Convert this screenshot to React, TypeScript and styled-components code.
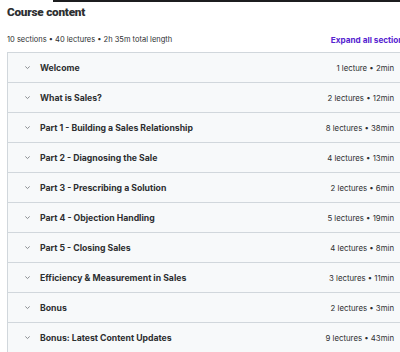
import React from "react";
import styled, { createGlobalStyle } from "styled-components";

const GlobalStyle = createGlobalStyle`
  html, body {
    margin: 0;
    padding: 0;
    background: #ffffff;
    overflow: hidden;
  }
  body {
    font-family: Inter, "Liberation Sans", sans-serif;
    color: #2d2f31;
  }
`;

const Page = styled.div`
  width: 400px;
  height: 352px;
  position: relative;
  overflow: hidden;
`;

const TopBar = styled.div`
  margin-left: 53px;
  height: 2px;
  background: #1c1d1f;
`;

const Content = styled.div`
  padding-left: 7px;
  width: 396px;
`;

const Title = styled.h2`
  margin: 1px 0 0;
  font-family: Roboto, "Liberation Sans", sans-serif;
  font-size: 11.8px;
  font-weight: 900;
  letter-spacing: -0.25px;
  line-height: 18px;
  color: #2d2f31;
`;

const SummaryRow = styled.div`
  display: flex;
  justify-content: space-between;
  align-items: center;
  margin-top: 11px;
  height: 15px;
  white-space: nowrap;
`;

const Summary = styled.span`
  font-size: 7.5px;
  color: #2d2f31;
`;

const ExpandLink = styled.span`
  font-size: 8.2px;
  font-weight: 700;
  color: #5624d0;
  margin-right: -5px;
`;

const Sections = styled.div`
  margin-top: 5px;
  border: 1px solid #d1d7dc;
  border-right: none;
  display: flex;
  flex-direction: column;
`;

const SectionRow = styled.div<{ $last?: boolean }>`
  display: flex;
  align-items: center;
  height: 29px;
  background: #f7f9fa;
  border-bottom: ${(p) => (p.$last ? "none" : "1px solid #d1d7dc")};
  padding: 0 9px 0 16px;
`;

const Chevron = styled.svg`
  width: 7px;
  height: 7px;
  flex: none;
  margin-right: 9px;
`;

const SectionTitle = styled.span`
  flex: 1;
  font-size: 8.7px;
  font-weight: 700;
  color: #2d2f31;
  white-space: nowrap;
`;

const SectionMeta = styled.span`
  font-size: 7.8px;
  color: #2d2f31;
  white-space: nowrap;
`;

const sections = [
  { title: "Welcome", meta: "1 lecture • 2min" },
  { title: "What is Sales?", meta: "2 lectures • 12min" },
  { title: "Part 1 - Building a Sales Relationship", meta: "8 lectures • 38min" },
  { title: "Part 2 - Diagnosing the Sale", meta: "4 lectures • 13min" },
  { title: "Part 3 - Prescribing a Solution", meta: "2 lectures • 6min" },
  { title: "Part 4 - Objection Handling", meta: "5 lectures • 19min" },
  { title: "Part 5 - Closing Sales", meta: "4 lectures • 8min" },
  { title: "Efficiency & Measurement in Sales", meta: "3 lectures • 11min" },
  { title: "Bonus", meta: "2 lectures • 3min" },
  { title: "Bonus: Latest Content Updates", meta: "9 lectures • 43min" },
];

function App() {
  return (
    <Page>
      <GlobalStyle />
      <TopBar />
      <Content>
        <Title>Course content</Title>
        <SummaryRow>
          <Summary>10 sections • 40 lectures • 2h 35m total length</Summary>
          <ExpandLink>Expand all sections</ExpandLink>
        </SummaryRow>
        <Sections>
          {sections.map((s, i) => (
            <SectionRow key={s.title} $last={i === sections.length - 1}>
              <Chevron viewBox="0 0 8 8">
                <path d="M1.5 2.8 L4 5.2 L6.5 2.8" fill="none" stroke="#6a6f73" strokeWidth="0.9" />
              </Chevron>
              <SectionTitle>{s.title}</SectionTitle>
              <SectionMeta>{s.meta}</SectionMeta>
            </SectionRow>
          ))}
        </Sections>
      </Content>
    </Page>
  );
}

export default App;
